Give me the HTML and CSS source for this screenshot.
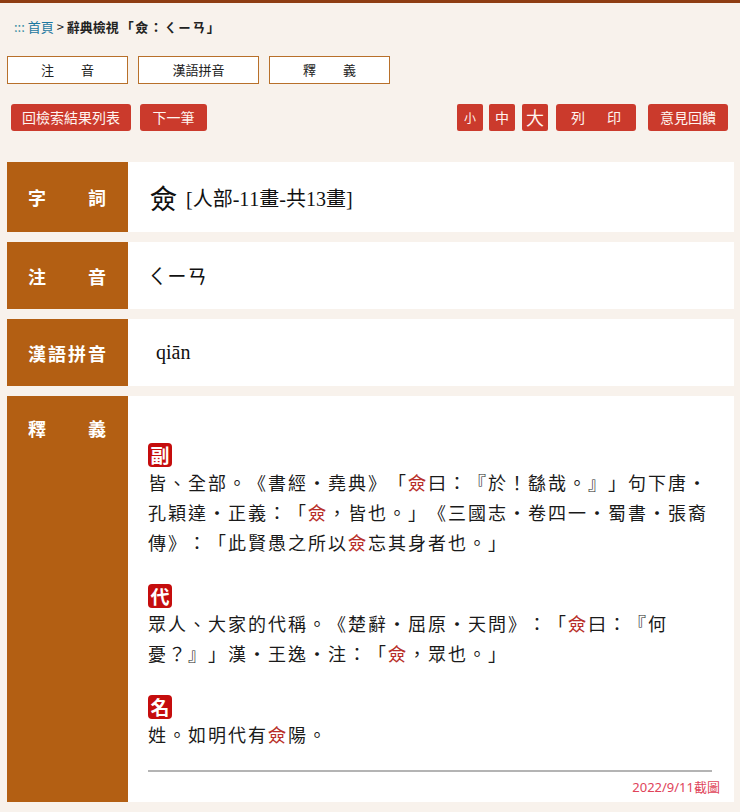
FILE: index.html
```html
<!DOCTYPE html>
<html lang="zh-Hant">
<head>
<meta charset="utf-8">
<title>辭典檢視</title>
<link rel="stylesheet" href="styles.css">
</head>
<body>
<div class="page">
  <div class="crumb"><span class="dots">:::</span> <a class="home" href="#">首頁</a> &gt; <b>辭典檢視<span class="term">「僉：ㄑㄧㄢ」</span></b></div>

  <div class="tabs">
    <a class="tab" href="#">注音</a>
    <a class="tab tab-c" href="#">漢語拼音</a>
    <a class="tab" href="#">釋義</a>
  </div>

  <div class="toolbar">
    <div class="group">
      <a class="btn btn-w" href="#">回檢索結果列表</a>
      <a class="btn btn-n" href="#">下一筆</a>
    </div>
    <div class="group right">
      <a class="btn sz sz-s" href="#">小</a>
      <a class="btn sz sz-m" href="#">中</a>
      <a class="btn sz sz-l" href="#">大</a>
      <a class="btn btn-p" href="#"><span>列</span><span>印</span></a>
      <a class="btn btn-f" href="#">意見回饋</a>
    </div>
  </div>

  <div class="table">
    <div class="row r1">
      <div class="label"><span>字</span><span>詞</span></div>
      <div class="cell"><span class="big">僉</span> <span class="info">[人部-11畫-共13畫]</span></div>
    </div>
    <div class="row r2">
      <div class="label"><span>注</span><span>音</span></div>
      <div class="cell zy">ㄑㄧㄢ</div>
    </div>
    <div class="row r3">
      <div class="label"><span>漢</span><span>語</span><span>拼</span><span>音</span></div>
      <div class="cell py">qiān</div>
    </div>
    <div class="row r4">
      <div class="label top"><span>釋</span><span>義</span></div>
      <div class="cell defs">
        <div class="wrap">
          <div class="sec">
            <div class="tagline"><span class="tag">副</span></div>
            <p>皆、全部。《書經・堯典》「<em>僉</em>曰：『於！繇哉。』」句下唐・孔穎達・正義：「<em>僉</em>，皆也。」《三國志・卷四一・蜀書・張裔傳》：「此賢愚之所以<em>僉</em>忘其身者也。」</p>
          </div>
          <div class="sec">
            <div class="tagline"><span class="tag">代</span></div>
            <p>眾人、大家的代稱。《楚辭・屈原・天問》：「<em>僉</em>曰：『何憂？』」漢・王逸・注：「<em>僉</em>，眾也。」</p>
          </div>
          <div class="sec">
            <div class="tagline"><span class="tag">名</span></div>
            <p>姓。如明代有<em>僉</em>陽。</p>
          </div>
          <hr class="rule">
        </div>
        <div class="date">2022/9/11截圖</div>
      </div>
    </div>
  </div>
</div>
</body>
</html>
```

FILE: styles.css
```css
html, body {
  margin: 0;
  padding: 0;
  background: #f8f2ec;
}
body {
  border-top: 3px solid #8e3d12;
  font-family: "Noto Sans CJK TC", "Noto Sans", sans-serif;
  color: #222;
  text-spacing-trim: space-all;
  font-kerning: none;
}
.page {
  padding: 0 6px 10px 7px;
}
a { text-decoration: none; }

.crumb {
  font-size: 13px;
  line-height: 18px;
  padding: 15px 0 0 7px;
  height: 18px;
  color: #222;
}
.crumb .dots { color: #3a8fa3; letter-spacing: 0; }
.crumb .home { color: #1d78a0; }
.crumb b { font-weight: 700; }
.crumb .term { letter-spacing: 1.3px; margin-left: 2px; }

.tabs {
  display: flex;
  gap: 10px;
  margin-top: 20px;
}
.tab {
  box-sizing: border-box;
  width: 121px;
  height: 28px;
  border: 1px solid #b8702a;
  background: #fff;
  color: #222;
  font-size: 13px;
  line-height: 26px;
  padding: 0 33px 0 33px;
  text-align: justify;
  text-align-last: justify;
}
.tab-c {
  text-align: center;
  text-align-last: center;
  padding: 0;
}

.toolbar {
  display: flex;
  justify-content: space-between;
  margin-top: 20px;
  padding: 0 6px 0 4px;
}
.group {
  display: flex;
  gap: 9px;
}
.group.right { gap: 6px; }
.btn {
  box-sizing: border-box;
  height: 27px;
  background: #cb3a2c;
  color: #fff5f0;
  border-radius: 3px;
  font-size: 14px;
  line-height: 27px;
  text-align: center;
  display: block;
}
.btn-w { width: 120px; }
.btn-n { width: 67px; }
.sz { width: 26px; border-radius: 2px; }
.sz-s { font-size: 12px; }
.sz-m { font-size: 14px; margin-left: 0; }
.sz-l { font-size: 18px; margin-left: 1px; }
.btn-p {
  width: 80px;
  margin-left: 2px;
  display: flex;
  justify-content: space-between;
  padding: 0 15px;
}
.btn-f { width: 80px; margin-left: 6px; }

.table {
  display: flex;
  flex-direction: column;
  gap: 10px;
  margin-top: 31px;
}
.row {
  display: grid;
  grid-template-columns: 121px 1fr;
}
.r1 { height: 70px; }
.r2 { height: 67px; }
.r3 { height: 67px; }
.r4 { min-height: 406px; }
.label {
  background: #b35f13;
  color: #fff;
  font-weight: 700;
  font-size: 18px;
  padding: 0 22px 0 21px;
  display: flex;
  align-items: center;
  justify-content: space-between;
}
.label.top {
  align-items: flex-start;
  padding-top: 19px;
  line-height: 26px;
}
.cell {
  background: #fff;
  display: flex;
  align-items: center;
  padding-left: 22px;
  font-family: "Liberation Serif", "Noto Sans CJK TC", serif;
  color: #111;
}
.big { font-size: 27px; margin-right: 9px; }
.info { font-size: 20px; }
.zy { font-size: 20px; padding-left: 19px; }
.py { font-size: 20px; padding-left: 28px; }

.defs {
  display: block;
  padding: 45px 14px 0 20px;
}
.wrap { margin-right: 8px; }
.sec { margin-bottom: 23px; }
.sec:last-of-type { margin-bottom: 0; }
.tagline {
  height: 28px;
  display: flex;
  align-items: center;
}
.tag {
  display: inline-block;
  width: 24px;
  height: 24px;
  border-radius: 4px;
  background: #c50d0d;
  color: #fff;
  font-family: "Noto Sans CJK TC", sans-serif;
  font-weight: 700;
  font-size: 19px;
  line-height: 24px;
  text-align: center;
}
.sec p {
  margin: 0;
  font-size: 18px;
  line-height: 30px;
  letter-spacing: 2px;
  color: #1a1a1a;
}
.sec em {
  font-style: normal;
  color: #b8302a;
}
.rule {
  border: 0;
  height: 2px;
  background: #b4b4b4;
  margin: 19px 0 0 0;
}
.date {
  text-align: right;
  font-family: "Noto Sans", "Noto Sans CJK TC", sans-serif;
  font-size: 13px;
  color: #e0445a;
  line-height: 18px;
  margin-top: 6px;
}
```
